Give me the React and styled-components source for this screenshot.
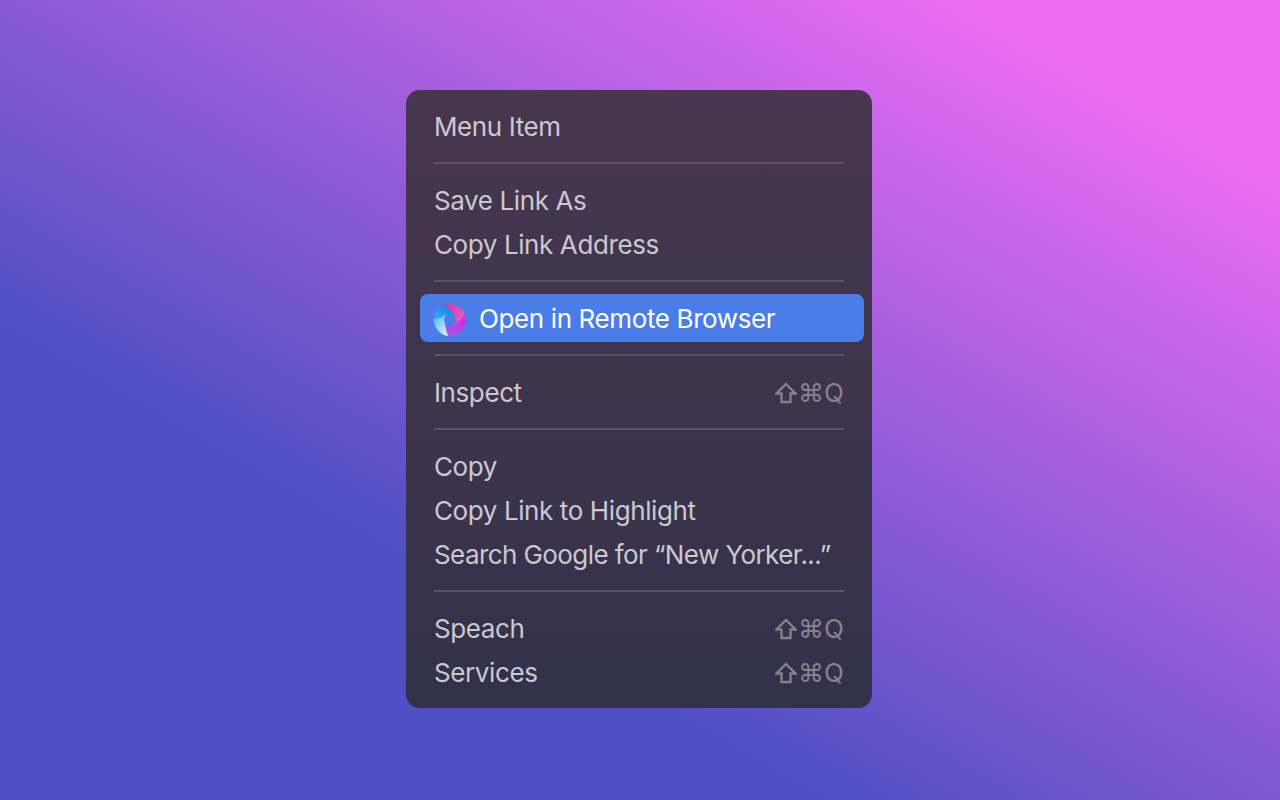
import React from "react";
import styled, { createGlobalStyle } from "styled-components";

const Global = createGlobalStyle`
  html, body { margin: 0; padding: 0; height: 100%; }
  body { font-family: Inter, "Liberation Sans", sans-serif; }
`;

const Page = styled.main`
  width: 1280px;
  height: 800px;
  overflow: hidden;
  display: flex;
  justify-content: flex-start;
  align-items: flex-start;
  padding: 90px 0 0 406px;
  box-sizing: border-box;
  background: linear-gradient(30deg, #4f4fc4 0%, #4f4fc4 30.8%, #eb6cf3 87.8%, #eb6cf3 100%);
`;

const Menu = styled.div`
  width: 466px;
  height: 618px;
  box-sizing: border-box;
  padding: 15px 8px 13px 14px;
  border-radius: 14px;
  background: linear-gradient(180deg, #47374f 0%, #33314a 100%);
  display: flex;
  flex-direction: column;
`;

const Row = styled.div`
  height: 44px;
  box-sizing: border-box;
  padding: 0 20px 1px 14px;
  display: flex;
  align-items: center;
  justify-content: space-between;
  font-size: 26px;
  font-weight: 400;
  letter-spacing: ${(p) => p.$spacing ?? -0.4}px;
  color: #cbc9cf;
  white-space: nowrap;
`;

const Highlight = styled.div`
  height: 48px;
  padding: 0 14px;
  display: flex;
  align-items: center;
  gap: 13px;
  border-radius: 8px;
  background: #4a7de8;
  font-size: 26px;
  letter-spacing: -0.38px;
  color: #ffffff;
  white-space: nowrap;
`;

const Separator = styled.hr`
  border: 0;
  height: 2px;
  margin: ${(p) => p.$top}px 20px ${(p) => p.$bottom}px 14px;
  background: #5c5165;
  flex: none;
`;

const Shortcut = styled.span`
  display: flex;
  align-items: center;
  color: #858290;
  font-size: 26px;
  letter-spacing: 0;
`;

const ShiftGlyph = styled.svg`
  margin-right: 1px;
`;

const ShiftIcon = () => (
  <ShiftGlyph width="22" height="22" viewBox="0 0 22 22" fill="none" stroke="#858290" strokeWidth="2.3">
    <path d="M11 2 L20.5 11.5 H15.5 V20 H6.5 V11.5 H1.5 Z" strokeLinejoin="miter" />
  </ShiftGlyph>
);

const LogoMark = styled.svg`
  flex: none;
  margin-top: 4px;
`;

const Logo = () => (
  <LogoMark width="32" height="32" viewBox="0 0 32 32">
    <defs>
      <linearGradient id="logoPink" x1="0" y1="0" x2="1" y2="0.6">
        <stop offset="0" stopColor="#e42f9c" />
        <stop offset="1" stopColor="#da62c8" />
      </linearGradient>
      <linearGradient id="logoPurple" x1="0.7" y1="0" x2="0.3" y2="1">
        <stop offset="0" stopColor="#e41fdc" />
        <stop offset="1" stopColor="#9a5cea" />
      </linearGradient>
      <linearGradient id="logoLight" x1="0" y1="0" x2="0.9" y2="1">
        <stop offset="0" stopColor="#58b2f0" />
        <stop offset="1" stopColor="#e2f4fb" />
      </linearGradient>
      <linearGradient id="logoBlue" x1="0" y1="1" x2="1" y2="0">
        <stop offset="0" stopColor="#3ab0f0" />
        <stop offset="1" stopColor="#1878e4" />
      </linearGradient>
    </defs>
    <path fill="url(#logoPink)" d="M16 16 L21 11.5 Q16.5 4.5 10 1.2 A16 16 0 0 1 30.8 10 Q27.5 16.5 20.5 21 Z" />
    <path fill="url(#logoPurple)" d="M16 16 L20.5 21 Q27.5 16.5 30.8 10 A16 16 0 0 1 14 31.9 Q12 27 11 20.5 Z" />
    <path fill="url(#logoLight)" d="M16 16 L11 20.5 Q12 27 14 31.9 A16 16 0 0 1 0.1 14 Q4.5 15.5 11.5 11 Z" />
    <path fill="url(#logoBlue)" d="M16 16 L11.5 11 Q4.5 15.5 0.1 14 A16 16 0 0 1 10 1.2 Q16.5 4.5 21 11.5 Z" />
    <circle cx="16" cy="16" r="6" fill="#4a7de8" />
  </LogoMark>
);

const Keys = () => (
  <Shortcut>
    <ShiftIcon />
    ⌘Q
  </Shortcut>
);

export default function App() {
  return (
    <Page>
      <Global />
      <Menu>
        <Row>Menu Item</Row>
        <Separator $top={13} $bottom={15} />
        <Row>Save Link As</Row>
        <Row>Copy Link Address</Row>
        <Separator $top={13} $bottom={12} />
        <Highlight>
          <Logo />
          Open in Remote Browser
        </Highlight>
        <Separator $top={12} $bottom={15} />
        <Row>Inspect<Keys /></Row>
        <Separator $top={13} $bottom={15} />
        <Row>Copy</Row>
        <Row>Copy Link to Highlight</Row>
        <Row $spacing={-0.58}>Search Google for “New Yorker...”</Row>
        <Separator $top={13} $bottom={15} />
        <Row>Speach<Keys /></Row>
        <Row>Services<Keys /></Row>
      </Menu>
    </Page>
  );
}
